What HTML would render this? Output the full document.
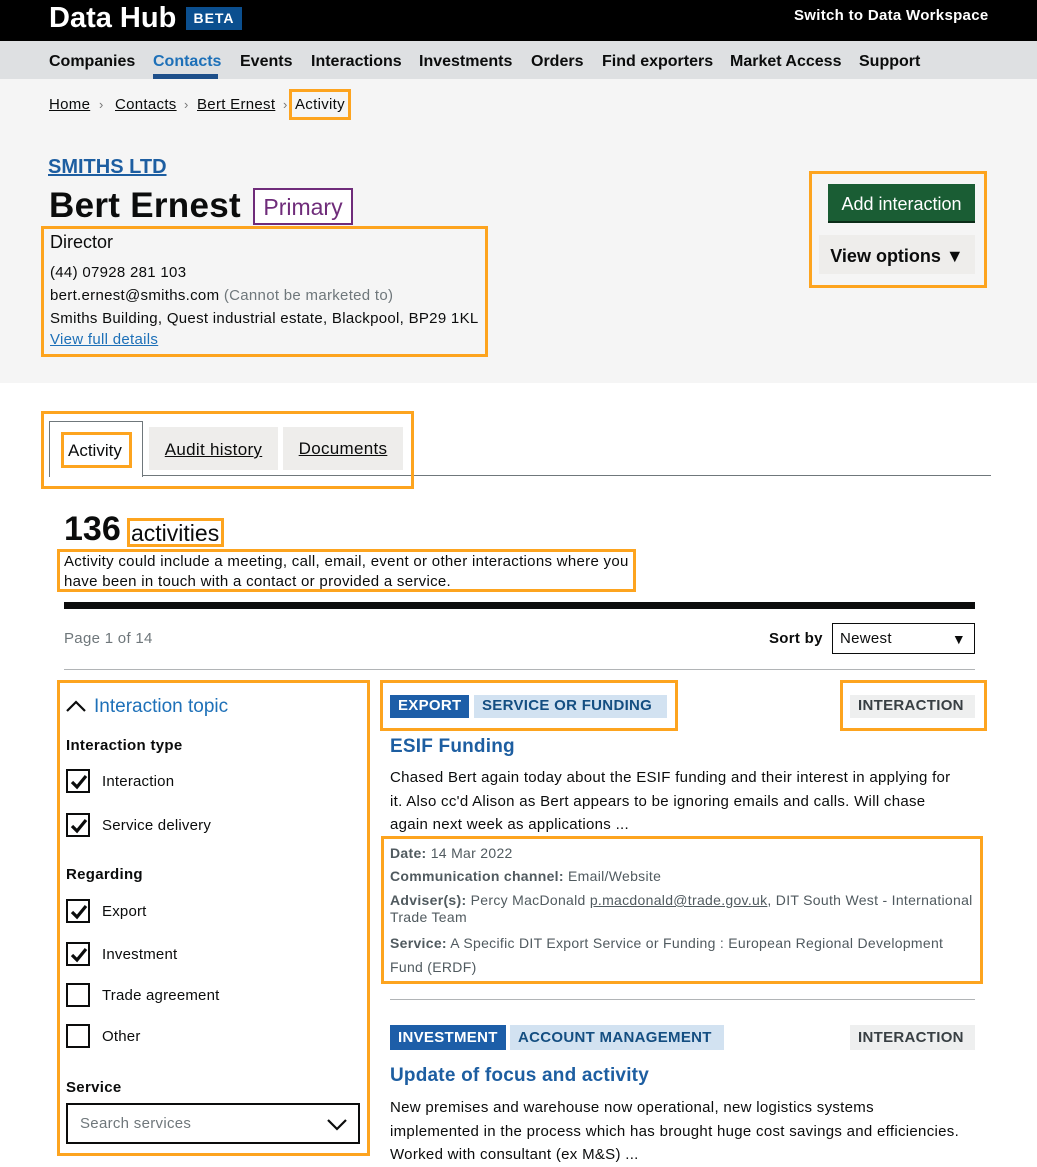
<!DOCTYPE html>
<html><head><meta charset="utf-8"><style>
*{margin:0;padding:0;box-sizing:border-box}
body{width:1037px;height:1162px;position:relative;overflow:hidden;background:#fff;font-family:"Liberation Sans",Arial,sans-serif;color:#0b0c0c}
.a{position:absolute;white-space:nowrap}
.ob{position:absolute;border:3px solid #fda41f}
.cb{position:absolute;left:66px;width:24px;height:24px;border:2px solid #0b0c0c;background:#fff}
.cb svg{position:absolute;left:1px;top:1px}
.lb{position:absolute;left:102px;font-size:15px;line-height:18px;letter-spacing:.2px}
.tag{position:absolute;font-size:15px;font-weight:bold;line-height:22px;height:23px;padding:0 8px;letter-spacing:.3px}
.meta{font-size:14px;color:#505a5f;line-height:18px;letter-spacing:.3px}
.meta b{color:#505a5f}
.t{letter-spacing:.3px}
</style></head><body>
<div class="a" style="left:0;top:0;width:1037px;height:41px;background:#000"></div>
<div class="a" style="left:49px;top:1px;font-size:29px;font-weight:bold;color:#fff;line-height:34px">Data Hub</div>
<div class="a" style="left:186px;top:7px;width:56px;height:23px;background:#0b4f8f;color:#fff;font-size:14px;font-weight:bold;letter-spacing:1px;text-align:center;line-height:23px">BETA</div>
<div class="a" style="left:794px;top:7px;font-size:15px;font-weight:bold;color:#fff;line-height:18px;letter-spacing:.3px">Switch to Data Workspace</div>
<div class="a" style="left:0;top:41px;width:1037px;height:38px;background:#dee0e2"></div>
<div class="a" style="left:0;top:79px;width:1037px;height:304px;background:#f5f5f5"></div>
<div class="a" style="top:52px;font-size:16px;font-weight:bold;line-height:19px;left:49px">Companies</div>
<div class="a" style="top:52px;font-size:16px;font-weight:bold;line-height:19px;left:153px;color:#1d70b8">Contacts</div>
<div class="a" style="left:153px;top:74px;width:65px;height:5px;background:#1d4f8a"></div>
<div class="a" style="top:52px;font-size:16px;font-weight:bold;line-height:19px;left:240px">Events</div>
<div class="a" style="top:52px;font-size:16px;font-weight:bold;line-height:19px;left:311px">Interactions</div>
<div class="a" style="top:52px;font-size:16px;font-weight:bold;line-height:19px;left:419px">Investments</div>
<div class="a" style="top:52px;font-size:16px;font-weight:bold;line-height:19px;left:531px">Orders</div>
<div class="a" style="top:52px;font-size:16px;font-weight:bold;line-height:19px;left:602px">Find exporters</div>
<div class="a" style="top:52px;font-size:16px;font-weight:bold;line-height:19px;left:730px">Market Access</div>
<div class="a" style="top:52px;font-size:16px;font-weight:bold;line-height:19px;left:859px">Support</div>

<div class="a t" style="top:96px;font-size:15px;line-height:18px;left:49px;text-decoration:underline">Home</div>
<div class="a" style="top:96px;font-size:13px;line-height:18px;left:99px;color:#777">›</div>
<div class="a t" style="top:96px;font-size:15px;line-height:18px;left:115px;text-decoration:underline">Contacts</div>
<div class="a" style="top:96px;font-size:13px;line-height:18px;left:184px;color:#777">›</div>
<div class="a t" style="top:96px;font-size:15px;line-height:18px;left:197px;text-decoration:underline">Bert Ernest</div>
<div class="a" style="top:96px;font-size:13px;line-height:18px;left:283px;color:#777">›</div>
<div class="a t" style="top:96px;font-size:15px;line-height:18px;left:295px">Activity</div>
<div class="ob" style="left:289px;top:89px;width:62px;height:31px"></div>

<div class="a" style="left:48px;top:155px;font-size:20px;font-weight:bold;color:#1d5ea1;text-decoration:underline;line-height:24px">SMITHS LTD</div>
<div class="a" style="left:49px;top:185px;font-size:35px;font-weight:bold;line-height:42px;letter-spacing:.3px">Bert Ernest</div>
<div class="a" style="left:253px;top:188px;width:100px;height:37px;border:2px solid #6f2c7a;background:#fff;color:#6f2c7a;font-size:23px;line-height:35px;text-align:center">Primary</div>
<div class="ob" style="left:41px;top:226px;width:447px;height:131px"></div>
<div class="a" style="left:50px;top:232px;font-size:18px;line-height:21px">Director</div>
<div class="a t" style="left:50px;top:264px;font-size:15px;line-height:18px">(44) 07928 281 103</div>
<div class="a t" style="left:50px;top:287px;font-size:15px;line-height:18px">bert.ernest@smiths.com <span style="color:#6f777b">(Cannot be marketed to)</span></div>
<div class="a t" style="left:50px;top:310px;font-size:15px;line-height:18px">Smiths Building, Quest industrial estate, Blackpool, BP29 1KL</div>
<div class="a t" style="left:50px;top:331px;font-size:15px;line-height:18px;color:#1d70b8;text-decoration:underline">View full details</div>

<div class="ob" style="left:809px;top:171px;width:178px;height:117px"></div>
<div class="a" style="left:828px;top:184px;width:147px;height:39px;background:#1a5d34;border-bottom:2px solid #0b2d18;color:#fff;font-size:18px;line-height:40px;text-align:center">Add interaction</div>
<div class="a" style="left:819px;top:235px;width:156px;height:39px;background:#eeedeb;font-size:18px;font-weight:bold;line-height:42px;text-align:center">View options ▼</div>

<div class="a" style="left:142px;top:475px;width:849px;height:1px;background:#6f777b"></div>
<div class="a" style="left:49px;top:421px;width:94px;height:56px;border:1px solid #6f777b;border-bottom:none;background:#fff"></div>
<div class="a" style="left:68px;top:441px;font-size:17px;line-height:20px">Activity</div>
<div class="ob" style="left:61px;top:432px;width:71px;height:36px"></div>
<div class="a" style="left:149px;top:427px;width:129px;height:43px;background:#eeedeb;font-size:17px;line-height:46px;text-align:center;text-decoration:underline;letter-spacing:.3px">Audit history</div>
<div class="a" style="left:283px;top:427px;width:120px;height:43px;background:#eeedeb;font-size:17px;line-height:44px;text-align:center;text-decoration:underline;letter-spacing:.3px">Documents</div>
<div class="ob" style="left:41px;top:411px;width:373px;height:78px"></div>

<div class="a" style="left:64px;top:509px;font-size:34px;font-weight:bold;line-height:40px">136</div>
<div class="a" style="left:131px;top:519px;font-size:23px;line-height:28px">activities</div>
<div class="ob" style="left:127px;top:518px;width:97px;height:29px"></div>
<div class="a t" style="left:64px;top:552px;font-size:15px;line-height:19.5px">Activity could include a meeting, call, email, event or other interactions where you<br>have been in touch with a contact or provided a service.</div>
<div class="ob" style="left:57px;top:549px;width:579px;height:43px"></div>
<div class="a" style="left:64px;top:602px;width:911px;height:7px;background:#0b0c0c"></div>
<div class="a t" style="left:64px;top:630px;font-size:15px;line-height:18px;color:#6f777b">Page 1 of 14</div>
<div class="a t" style="left:769px;top:630px;font-size:15px;font-weight:bold;line-height:18px">Sort by</div>
<div class="a t" style="left:832px;top:623px;width:143px;height:31px;border:1px solid #0b0c0c;font-size:15px;line-height:30px;padding-left:7px">Newest<span style="position:absolute;right:8px;top:0;font-size:14px">▼</span></div>
<div class="a" style="left:64px;top:669px;width:911px;height:1px;background:#b1b4b6"></div>

<div class="ob" style="left:57px;top:680px;width:313px;height:476px"></div>
<svg class="a" style="left:65px;top:699px" width="22" height="14"><path d="M2 12 L11 3 L20 12" fill="none" stroke="#0b0c0c" stroke-width="2.2"/></svg>
<div class="a" style="left:94px;top:696px;font-size:19px;line-height:22px;color:#1d70b8">Interaction topic</div>
<div class="a t" style="left:66px;top:737px;font-size:15px;font-weight:bold;line-height:18px">Interaction type</div>
<div class="cb" style="top:769px"><svg width="20" height="20"><path d="M3 10 L8 15 L17 4" fill="none" stroke="#0b0c0c" stroke-width="3.2"/></svg></div>
<div class="lb" style="top:773px">Interaction</div>
<div class="cb" style="top:813px"><svg width="20" height="20"><path d="M3 10 L8 15 L17 4" fill="none" stroke="#0b0c0c" stroke-width="3.2"/></svg></div>
<div class="lb" style="top:817px">Service delivery</div>
<div class="a t" style="left:66px;top:866px;font-size:15px;font-weight:bold;line-height:18px">Regarding</div>
<div class="cb" style="top:899px"><svg width="20" height="20"><path d="M3 10 L8 15 L17 4" fill="none" stroke="#0b0c0c" stroke-width="3.2"/></svg></div>
<div class="lb" style="top:903px">Export</div>
<div class="cb" style="top:942px"><svg width="20" height="20"><path d="M3 10 L8 15 L17 4" fill="none" stroke="#0b0c0c" stroke-width="3.2"/></svg></div>
<div class="lb" style="top:946px">Investment</div>
<div class="cb" style="top:983px"></div>
<div class="lb" style="top:987px">Trade agreement</div>
<div class="cb" style="top:1024px"></div>
<div class="lb" style="top:1028px">Other</div>
<div class="a t" style="left:66px;top:1079px;font-size:15px;font-weight:bold;line-height:18px">Service</div>
<div class="a t" style="left:66px;top:1103px;width:294px;height:41px;border:2px solid #0b0c0c;font-size:15px;line-height:37px;padding-left:12px;color:#6f777b">Search services</div>
<svg class="a" style="left:326px;top:1117px" width="22" height="14"><path d="M2 3 L11 12 L20 3" fill="none" stroke="#0b0c0c" stroke-width="2.2"/></svg>

<div class="ob" style="left:380px;top:680px;width:298px;height:51px"></div>
<div class="tag" style="left:390px;top:695px;background:#1d5ea8;color:#fff">EXPORT</div>
<div class="tag" style="left:474px;top:695px;width:193px;background:#d2e2f1;color:#144e81">SERVICE OR FUNDING</div>
<div class="ob" style="left:840px;top:680px;width:147px;height:51px"></div>
<div class="tag" style="left:850px;top:695px;width:125px;background:#eeefef;color:#383f43">INTERACTION</div>
<div class="a" style="left:390px;top:736px;font-size:19px;font-weight:bold;line-height:22px;color:#1d5ea1;letter-spacing:.2px">ESIF Funding</div>
<div class="a t" style="left:390px;top:766px;font-size:15px;line-height:23.5px">Chased Bert again today about the ESIF funding and their interest in applying for<br>it. Also cc'd Alison as Bert appears to be ignoring emails and calls. Will chase<br>again next week as applications ...</div>
<div class="ob" style="left:381px;top:836px;width:602px;height:148px"></div>
<div class="a meta" style="left:390px;top:844px"><b>Date:</b> 14 Mar 2022</div>
<div class="a meta" style="left:390px;top:867px"><b>Communication channel:</b> Email/Website</div>
<div class="a meta" style="left:390px;top:891px"><b>Adviser(s):</b> Percy MacDonald <u>p.macdonald@trade.gov.uk</u>, DIT South West - International</div>
<div class="a meta" style="left:390px;top:908px">Trade Team</div>
<div class="a meta" style="left:390px;top:934px"><b>Service:</b> A Specific DIT Export Service or Funding : European Regional Development</div>
<div class="a meta" style="left:390px;top:958px">Fund (ERDF)</div>
<div class="a" style="left:390px;top:999px;width:585px;height:1px;background:#b1b4b6"></div>

<div class="tag" style="left:390px;top:1025px;height:25px;line-height:25px;background:#1d5ea8;color:#fff">INVESTMENT</div>
<div class="tag" style="left:510px;top:1025px;height:25px;line-height:25px;width:214px;background:#d2e2f1;color:#144e81">ACCOUNT MANAGEMENT</div>
<div class="tag" style="left:850px;top:1025px;height:25px;line-height:25px;width:125px;background:#eeefef;color:#383f43">INTERACTION</div>
<div class="a" style="left:390px;top:1065px;font-size:19px;font-weight:bold;line-height:22px;color:#1d5ea1;letter-spacing:.2px">Update of focus and activity</div>
<div class="a t" style="left:390px;top:1096px;font-size:15px;line-height:23.5px">New premises and warehouse now operational, new logistics systems<br>implemented in the process which has brought huge cost savings and efficiencies.<br>Worked with consultant (ex M&amp;S) ...</div>
</body></html>
